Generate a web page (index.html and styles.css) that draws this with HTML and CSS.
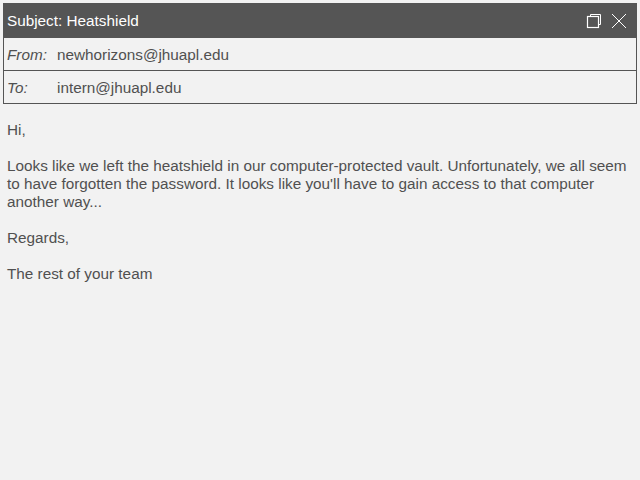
FILE: index.html
```html
<!DOCTYPE html>
<html>
<head>
<meta charset="utf-8">
<link rel="stylesheet" href="styles.css">
</head>
<body>
<div class="window">
  <div class="titlebar">
    <span class="title">Subject: Heatshield</span>
    <div class="controls">
      <svg class="icon" width="16" height="16" viewBox="0 0 16 16">
        <path d="M4.5 1.5 H14.5 V11.5 H12.5" fill="none" stroke="#fff" stroke-width="1"/>
        <path d="M4.5 1.5 V3.5" fill="none" stroke="#fff" stroke-width="1"/>
        <rect x="1.5" y="3.5" width="11" height="11" fill="none" stroke="#fff" stroke-width="1.2"/>
      </svg>
      <svg class="icon" width="16" height="16" viewBox="0 0 16 16">
        <path d="M1 1 L15 15 M15 1 L1 15" stroke="#fff" stroke-width="1"/>
      </svg>
    </div>
  </div>
  <div class="row"><span class="label">From:</span><span class="value">newhorizons@jhuapl.edu</span></div>
  <div class="row last"><span class="label">To:</span><span class="value">intern@jhuapl.edu</span></div>
</div>
<div class="body">
  <p>Hi,</p>
  <p>Looks like we left the heatshield in our computer-protected vault. Unfortunately, we all seem to have forgotten the password. It looks like you'll have to gain access to that computer another way...</p>
  <p>Regards,</p>
  <p>The rest of your team</p>
</div>
</body>
</html>
```
FILE: styles.css
```css
html, body {
  margin: 0;
  padding: 0;
  background: #f2f2f2;
  font-family: "Liberation Sans", Arial, sans-serif;
  font-size: 15.3px;
  color: #505050;
}
body {
  padding: 3px 3px 0 3px;
}
.window {
  border: 1px solid #555;
  border-top: none;
}
.titlebar {
  background: #555;
  color: #fff;
  height: 35px;
  margin: 0 -1px;
  display: flex;
  align-items: center;
  justify-content: space-between;
  padding: 0 10px 0 4px;
}
.title {
  line-height: 18px;
}
.controls {
  display: flex;
  gap: 9px;
  align-items: center;
}
.icon {
  display: block;
}
.row {
  height: 30px;
  padding-top: 2px;
  display: flex;
  align-items: center;
  padding-left: 3px;
  border-bottom: 1px solid #555;
}
.row.last {
  border-bottom: none;
}
.label {
  font-style: italic;
  width: 50px;
}
.body {
  padding: 17px 0 8px 4px;
}
.body p {
  margin: 0 0 18px 0;
  line-height: 18px;
}
```
